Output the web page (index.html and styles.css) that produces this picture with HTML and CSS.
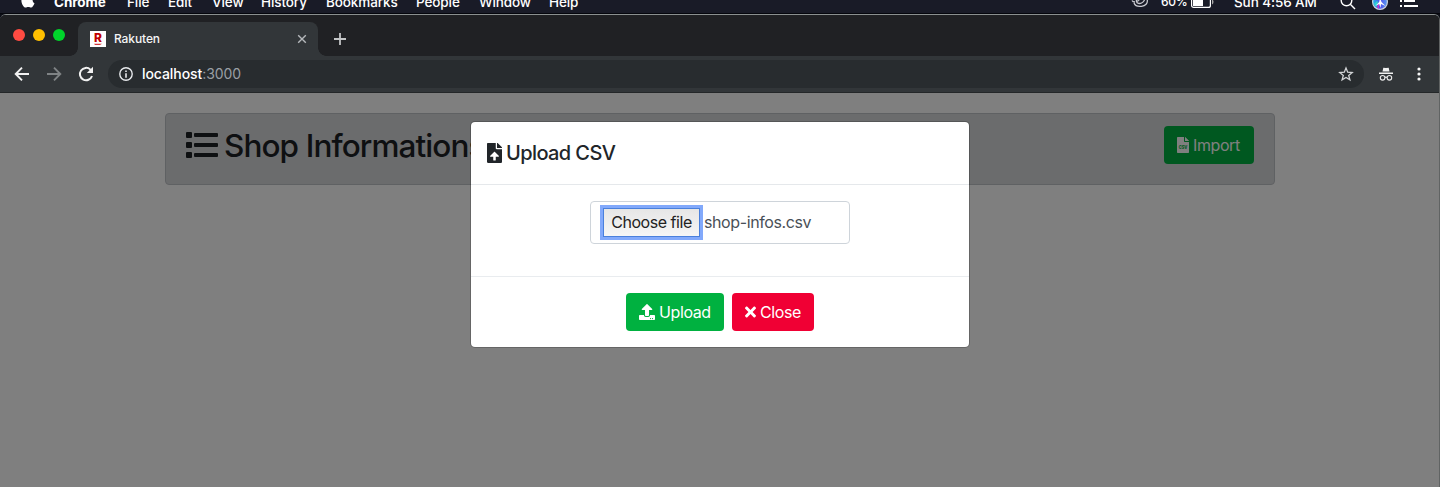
FILE: index.html
```
<!DOCTYPE html>
<html lang="en">
<head>
<meta charset="utf-8">
<title>Rakuten</title>
<link rel="stylesheet" href="styles.css">
</head>
<body>
<svg width="0" height="0" class="defs"><defs>
  <symbol id="upload" viewBox="0 0 512 512"><path d="M296 384h-80c-13.3 0-24-10.7-24-24V192h-87.7c-17.8 0-26.7-21.5-14.1-34.1L242.3 5.7c7.5-7.5 19.8-7.5 27.3 0l152.2 152.2c12.6 12.6 3.7 34.1-14.1 34.1H320v168c0 13.3-10.7 24-24 24zm216-8v112c0 13.3-10.7 24-24 24H24c-13.3 0-24-10.7-24-24V376c0-13.3 10.7-24 24-24h136v8c0 30.9 25.1 56 56 56h80c30.9 0 56-25.1 56-56v-8h136c13.3 0 24 10.7 24 24zm-124 88c0-11-9-20-20-20s-20 9-20 20 9 20 20 20 20-9 20-20zm64 0c0-11-9-20-20-20s-20 9-20 20 9 20 20 20 20-9 20-20z"/></symbol>
  <symbol id="times" viewBox="0 0 352 512"><path d="M242.72 256l100.07-100.07c12.28-12.28 12.28-32.19 0-44.48l-22.24-22.24c-12.28-12.28-32.19-12.28-44.48 0L176 189.28 75.93 89.21c-12.28-12.28-32.19-12.28-44.48 0L9.21 111.45c-12.28 12.28-12.28 32.19 0 44.48L109.28 256 9.21 356.07c-12.28 12.28-12.28 32.19 0 44.48l22.24 22.24c12.28 12.28 32.2 12.28 44.48 0L176 322.72l100.07 100.07c12.28 12.28 32.2 12.28 44.48 0l22.24-22.24c12.28-12.28 12.28-32.19 0-44.48L242.72 256z"/></symbol>
  <symbol id="file-upload" viewBox="0 0 384 512"><path d="M224 136V0H24C10.7 0 0 10.7 0 24v464c0 13.3 10.7 24 24 24h336c13.3 0 24-10.7 24-24V160H248c-13.2 0-24-10.8-24-24zm65.18 216.01H224v80c0 8.84-7.16 16-16 16h-32c-8.84 0-16-7.16-16-16v-80H94.82c-14.28 0-21.41-17.29-11.27-27.36l96.42-95.7c6.65-6.61 17.39-6.61 24.04 0l96.42 95.7c10.15 10.07 3.03 27.36-11.25 27.36zM377 105L279.1 7c-4.5-4.5-10.6-7-17-7H256v128h128v-6.1c0-6.3-2.5-12.4-7-16.9z"/></symbol>
</defs></svg>

<header class="menubar">
  <svg class="apple" width="14" height="17" viewBox="0 0 14 17"><path d="M9.4 0c.1 1.400-1.200 3-2.700 3C6.600 1.600 7.900.2 9.400 0zM13.500 12.200c-.7 1.900-2 4.300-3.400 4.300-1 0-1.500-.6-2.800-.6s-1.800.6-2.700.6C2.800 16.500.4 13 .4 9.200c0-3.200 1.900-5.200 4-5.200 1.200 0 2 .7 2.900.7.9 0 1.800-.8 3.300-.8 1.100 0 2.100.6 2.700 1.500-2.500 1.600-2.200 5.600.2 6.800z" fill="#fff"/></svg>
  <nav class="menus">
    <span class="m-chrome">Chrome</span><span class="m-file">File</span><span class="m-edit">Edit</span><span class="m-view">View</span><span class="m-history">History</span><span class="m-bookmarks">Bookmarks</span><span class="m-people">People</span><span class="m-window">Window</span><span class="m-help">Help</span>
  </nav>
  <div class="status">
    <svg class="cloud" width="18" height="16" viewBox="0 0 18 16" fill="none" stroke="#c9cad0" stroke-width="1.300"><path d="M1 8.500c.8 1.500 2 1.500 3 1.500M3 11c1 2.500 4 3.800 7.500 3.300 4-.5 6.300-3 5.800-6.300C15.800 5 13 3 10 4c-3.500 1-5 3-4.500 5.500.5 2 3 2.500 5 1.500 2-1 3.500-3 2.500-4M6.500 9.500C8 7 11 6 13 7"/></svg>
    <span class="pct">60%</span>
    <svg class="battery" width="23" height="12" viewBox="0 0 23 12"><rect x=".6" y=".6" width="18.800" height="10.800" rx="2" fill="none" stroke="#fff" stroke-width="1.200"/><rect x="2" y="2" width="10" height="8" fill="#fff"/><path d="M21 3.500q1.500.7 1.500 2.500T21 8.500z" fill="#aaa"/></svg>
    <span class="clock">Sun 4:56 AM</span>
    <svg class="search" width="16" height="16" viewBox="0 0 16 16" fill="none" stroke="#fff" stroke-width="1.400"><circle cx="6.500" cy="6.500" r="5.300"/><path d="M10.300 10.300l4.700 4.700"/></svg>
    <svg class="siri" width="18" height="18" viewBox="0 0 18 18"><defs><linearGradient id="sg" x1="0" x2="1"><stop offset="0" stop-color="#24bfe8"/><stop offset=".5" stop-color="#4f4ff0"/><stop offset="1" stop-color="#5aa0ee"/></linearGradient></defs><circle cx="9" cy="9" r="7.400" fill="url(#sg)" stroke="#cfd3de" stroke-width="1.200"/><path d="M3 11l3-3 1 1-2 5z" fill="#30d5d0"/><path d="M6 14l2-4v6z" fill="#c82fc5"/><path d="M9 5l1.500 4 4 4-4.500-2-.5 4-1.300-4-4 2 4-4z" fill="#fff"/></svg>
    <svg class="list-menu" width="18" height="14" viewBox="0 0 18 14" fill="#fff"><path d="M0 1h2v2H0zM4 1h11v2H4zM0 6h2v2H0zM4 6h11v2H4zM0 11h2v2H0zM4 11h14v2H4z"/></svg>
  </div>
</header>

<div class="window">
  <div class="tabstrip">
    <div class="lights"><i class="red"></i><i class="yellow"></i><i class="green"></i></div>
    <div class="tab">
      <span class="favicon">R<svg width="16" height="16" viewBox="0 0 16 16"><path d="M4 12.800h8l-2 1.300H5z" fill="#d23a3a"/></svg></span>
      <span class="tab-title">Rakuten</span>
      <svg class="tab-close" width="10" height="10" viewBox="0 0 10 10" stroke="#b5b8bb" stroke-width="1.400"><path d="M1.200 1.200l7.600 7.600M8.800 1.200L1.200 8.800"/></svg>
    </div>
    <svg class="new-tab" width="12" height="12" viewBox="0 0 12 12" stroke="#c3c5c7" stroke-width="1.800"><path d="M6 0v12M0 6h12"/></svg>
  </div>
  <div class="toolbar">
    <svg width="16" height="16" viewBox="0 0 16 16" fill="none" stroke="#f1f1f1" stroke-width="1.900"><path d="M15 8H2M8 1.700L1.700 8 8 14.300"/></svg>
    <svg width="16" height="16" viewBox="0 0 16 16" fill="none" stroke="#7f8385" stroke-width="1.900"><path d="M1 8h13M8 1.700L14.300 8 8 14.300"/></svg>
    <svg width="16" height="16" viewBox="0 0 16 16" fill="none" stroke="#f1f1f1" stroke-width="2"><path d="M14 10A6.200 6.200 0 1 1 12.400 3.600L14 5.200"/><path d="M15 .8V7H8.800z" fill="#f1f1f1" stroke="none"/></svg>
    <div class="omnibox">
      <svg width="14" height="14" viewBox="0 0 14 14"><circle cx="7" cy="7" r="6.200" fill="none" stroke="#e8eaed" stroke-width="1.400"/><path d="M6.200 3.500h1.600V5H6.200zM6.200 6.200h1.600v4.500H6.200z" fill="#e8eaed"/></svg>
      <span class="url"><b>localhost</b>:3000</span>
      <svg class="star" width="16" height="16" viewBox="0 0 16 16" fill="none" stroke="#d2d4d6" stroke-width="1.300"><path d="M8 2l1.700 4.200 4.500.3-3.500 2.900 1.200 4.400L8 11.400l-3.900 2.400 1.200-4.400L1.800 6.500l4.500-.3z"/></svg>
    </div>
    <svg class="incognito" width="14" height="14" viewBox="0 0 14 14"><path d="M3.500 4.500L4.300.7 7 1.100l2.700-.4.800 3.800zM0 5.500h14v1.400H0z" fill="#f1f1f1"/><g fill="none" stroke="#e8e8e8" stroke-width="1.100"><circle cx="3.600" cy="10.800" r="2.300"/><circle cx="10.400" cy="10.800" r="2.300"/><path d="M5.900 10.500q1.100-.8 2.200 0"/></g></svg>
    <svg class="dots" width="4" height="14" viewBox="0 0 4 14" fill="#f5f5f5"><circle cx="2" cy="2" r="1.600"/><circle cx="2" cy="7" r="1.600"/><circle cx="2" cy="12" r="1.600"/></svg>
  </div>

  <main class="page">
    <section class="card">
      <h2><svg width="32" height="32" viewBox="0 0 32 32"><g fill="currentColor"><rect y="2" width="6" height="6" rx="1"/><rect y="12" width="6" height="6" rx="1"/><rect y="22" width="6" height="6" rx="1"/><rect x="8" y="3" width="24" height="4" rx="1"/><rect x="8" y="13" width="24" height="4" rx="1"/><rect x="8" y="23" width="24" height="4" rx="1"/></g></svg><span>Shop Informations</span></h2>
      <button class="btn success import"><svg width="12" height="16" viewBox="0 0 12 16"><path d="M7 0v4.300q0 .7.700.7H12v10.300q0 .7-.7.700H.7q-.7 0-.7-.7V.7Q0 0 .7 0zM8 0h.2l3.800 3.800V4H8z" fill="currentColor"/><text x="1.700" y="12" textLength="8.600" lengthAdjust="spacingAndGlyphs" class="csv">CSV</text></svg><span>Import</span></button>
    </section>
    <div class="backdrop">
      <section class="modal">
        <div class="modal-header"><svg width="15" height="20"><use href="#file-upload"/></svg><h5>Upload CSV</h5></div>
        <div class="modal-body"><div class="file-input"><button class="choose">Choose file</button><span class="filename">shop-infos.csv</span></div></div>
        <div class="modal-footer">
          <button class="btn success upload"><svg width="16" height="16"><use href="#upload"/></svg><span>Upload</span></button>
          <button class="btn danger"><svg width="11" height="16"><use href="#times"/></svg><span>Close</span></button>
        </div>
      </section>
    </div>
  </main>
</div>
</body>
</html>
```
FILE: styles.css
```
* { box-sizing: border-box; }
body { margin: 0; height: 487px; overflow: hidden; background: #0c0e16; font-family: Inter, "Liberation Sans", sans-serif; display: flex; flex-direction: column; }
svg { display: block; flex: none; }
.defs { position: absolute; }
.menubar { height: 14px; flex: none; background: #191b27; border-bottom: 1px solid #05060c; display: flex; align-items: flex-end; padding: 0 22px 0 21px; color: #fff; font-size: 13.500px; font-weight: 500; }
.menubar span { line-height: 18px; height: 18px; margin-bottom: 2px; flex: none; white-space: nowrap; }
.apple { margin: 0 19px 5px 0; }
.menus { display: flex; align-items: flex-end; letter-spacing: -.1px; }
.m-chrome { width: 73px; font-weight: 700; }
.m-file { width: 41px; }
.m-edit { width: 44px; }
.m-view { width: 49px; }
.m-history { width: 65px; }
.m-bookmarks { width: 90px; }
.m-people { width: 63px; }
.m-window { width: 70px; }
.m-help { width: 32px; }
.status { display: flex; align-items: flex-end; margin-left: auto; }
.cloud { margin: 0 12px 5px 0; }
.status .pct { width: 30px; font-size: 12px; letter-spacing: -.3px; }
.battery { margin-bottom: 5px; }
.status .clock { margin-left: 20px; width: 106px; letter-spacing: -.1px; }
.search { margin-bottom: 3px; }
.siri { margin: 0 11px 2px 15px; }
.list-menu { margin-bottom: 5px; }
.window { flex: 1; border: 1px solid #8b9090; border-width: 1px 1px 0 0; border-right-color: #606363; border-radius: 6px 6px 0 0; overflow: hidden; display: flex; flex-direction: column; }
.tabstrip { height: 41px; background: #202124; display: flex; }
.lights { display: flex; gap: 8px; padding: 14px 0 0 13px; width: 78px; }
.lights i { width: 12px; height: 12px; border-radius: 50%; }
.red { background: #ff4b42; }
.yellow { background: #ffbf00; }
.green { background: #00d42b; }
.tab { width: 240px; height: 34px; margin-top: 7px; background: #323639; border-radius: 8px 8px 0 0; display: flex; align-items: center; padding: 0 11px 0 12px; position: relative; }
.tab::before, .tab::after { content: ""; position: absolute; bottom: 0; width: 8px; height: 8px; }
.tab::before { left: -8px; background: radial-gradient(circle at 0 0, #202124 7.500px, #323639 8px); }
.tab::after { right: -8px; background: radial-gradient(circle at 100% 0, #202124 7.500px, #323639 8px); }
.favicon { width: 16px; height: 16px; background: #fff; color: #c00000; font: 800 12px/14px Inter, sans-serif; text-align: center; position: relative; }
.favicon svg { position: absolute; left: 0; top: 0; }
.tab-title { color: #f5f5f5; font-size: 12px; font-weight: 500; margin: -1px 0 0 8px; letter-spacing: -.1px; }
.tab-close { margin-left: auto; }
.new-tab { margin: 18px 0 0 16px; }
.toolbar { height: 37px; background: #323639; border-bottom: 1px solid #242729; display: flex; align-items: center; padding: 0 18px 0 14px; }
.toolbar > svg + svg { margin-left: 16px; }
.omnibox { flex: 1; height: 28px; margin-left: 14px; border-radius: 14px; background: #282c2f; display: flex; align-items: center; padding: 0 10px 0 11px; }
.url { font-size: 14px; color: #9a9fa4; margin: -2px 0 0 9px; letter-spacing: -.07px; }
.url b { color: #fff; font-weight: 500; }
.star { margin-left: auto; }
.incognito { margin-left: 15px; }
.toolbar > .dots { margin-left: 24px; }
.page { flex: 1; position: relative; background: #fff; padding: 20px 164px 0 165px; }
.card { height: 72px; border: 1px solid #bfc2c6; border-radius: 4px; background: #d6d8db; display: flex; justify-content: space-between; padding: 12px 20px; color: #1d2124; }
.card h2 { margin: 0; display: flex; height: 40px; align-items: center; font-size: 31.500px; font-weight: 500; letter-spacing: -.9px; }
.card h2 span { margin: 0 0 1px 6px; white-space: nowrap; }
.btn { border: 0; border-radius: 4px; height: 38px; padding: 0 13px; display: flex; align-items: center; gap: 4px; color: #fff; font: 400 16px/24px Inter, sans-serif; letter-spacing: -.4px; white-space: nowrap; }
.success { background: #00b140; }
.danger { background: #f00034; }
.import { width: 90px; }
.csv { font: 800 5px Inter, sans-serif; fill: #00b140; letter-spacing: 0; }
.backdrop { position: absolute; inset: 0; background: rgba(0,0,0,.5); display: flex; justify-content: center; align-items: flex-start; padding: 28px 0 0 1px; }
.modal { width: 500px; height: 227px; border: 1px solid rgba(0,0,0,.2); border-radius: 5px; background: #fff; background-clip: padding-box; color: #212529; }
.modal-header { height: 63px; border-bottom: 1px solid #e5e8eb; display: flex; align-items: center; padding: 0 16px; }
.modal-header svg, .btn svg { fill: currentColor; }
.modal-header h5 { margin: 0 0 0 4px; font-size: 20px; font-weight: 500; letter-spacing: -.6px; }
.modal-body { height: 91px; padding-top: 16px; display: flex; justify-content: center; align-items: flex-start; }
.file-input { width: 260px; height: 43px; border: 1px solid #ced4da; border-radius: 4px; display: flex; align-items: center; padding: 0 12px; font-size: 16px; color: #495057; letter-spacing: -.4px; }
.choose { width: 97px; height: 29px; flex: none; padding: 0 0 2px; border: 1px solid #4a80dc; border-radius: 0; background: linear-gradient(#e6e6e6, #f6f6f6); box-shadow: 0 0 0 3px #82a9fb; color: #222; font: 400 16px Inter, sans-serif; letter-spacing: -.45px; white-space: nowrap; }
.filename { margin: 0 0 2px 4px; }
.modal-footer { height: 71px; border-top: 1px solid #e9ecef; display: flex; justify-content: center; align-items: center; gap: 8px; }
.upload { width: 98px; }
.modal-footer .danger { width: 82px; }
```
